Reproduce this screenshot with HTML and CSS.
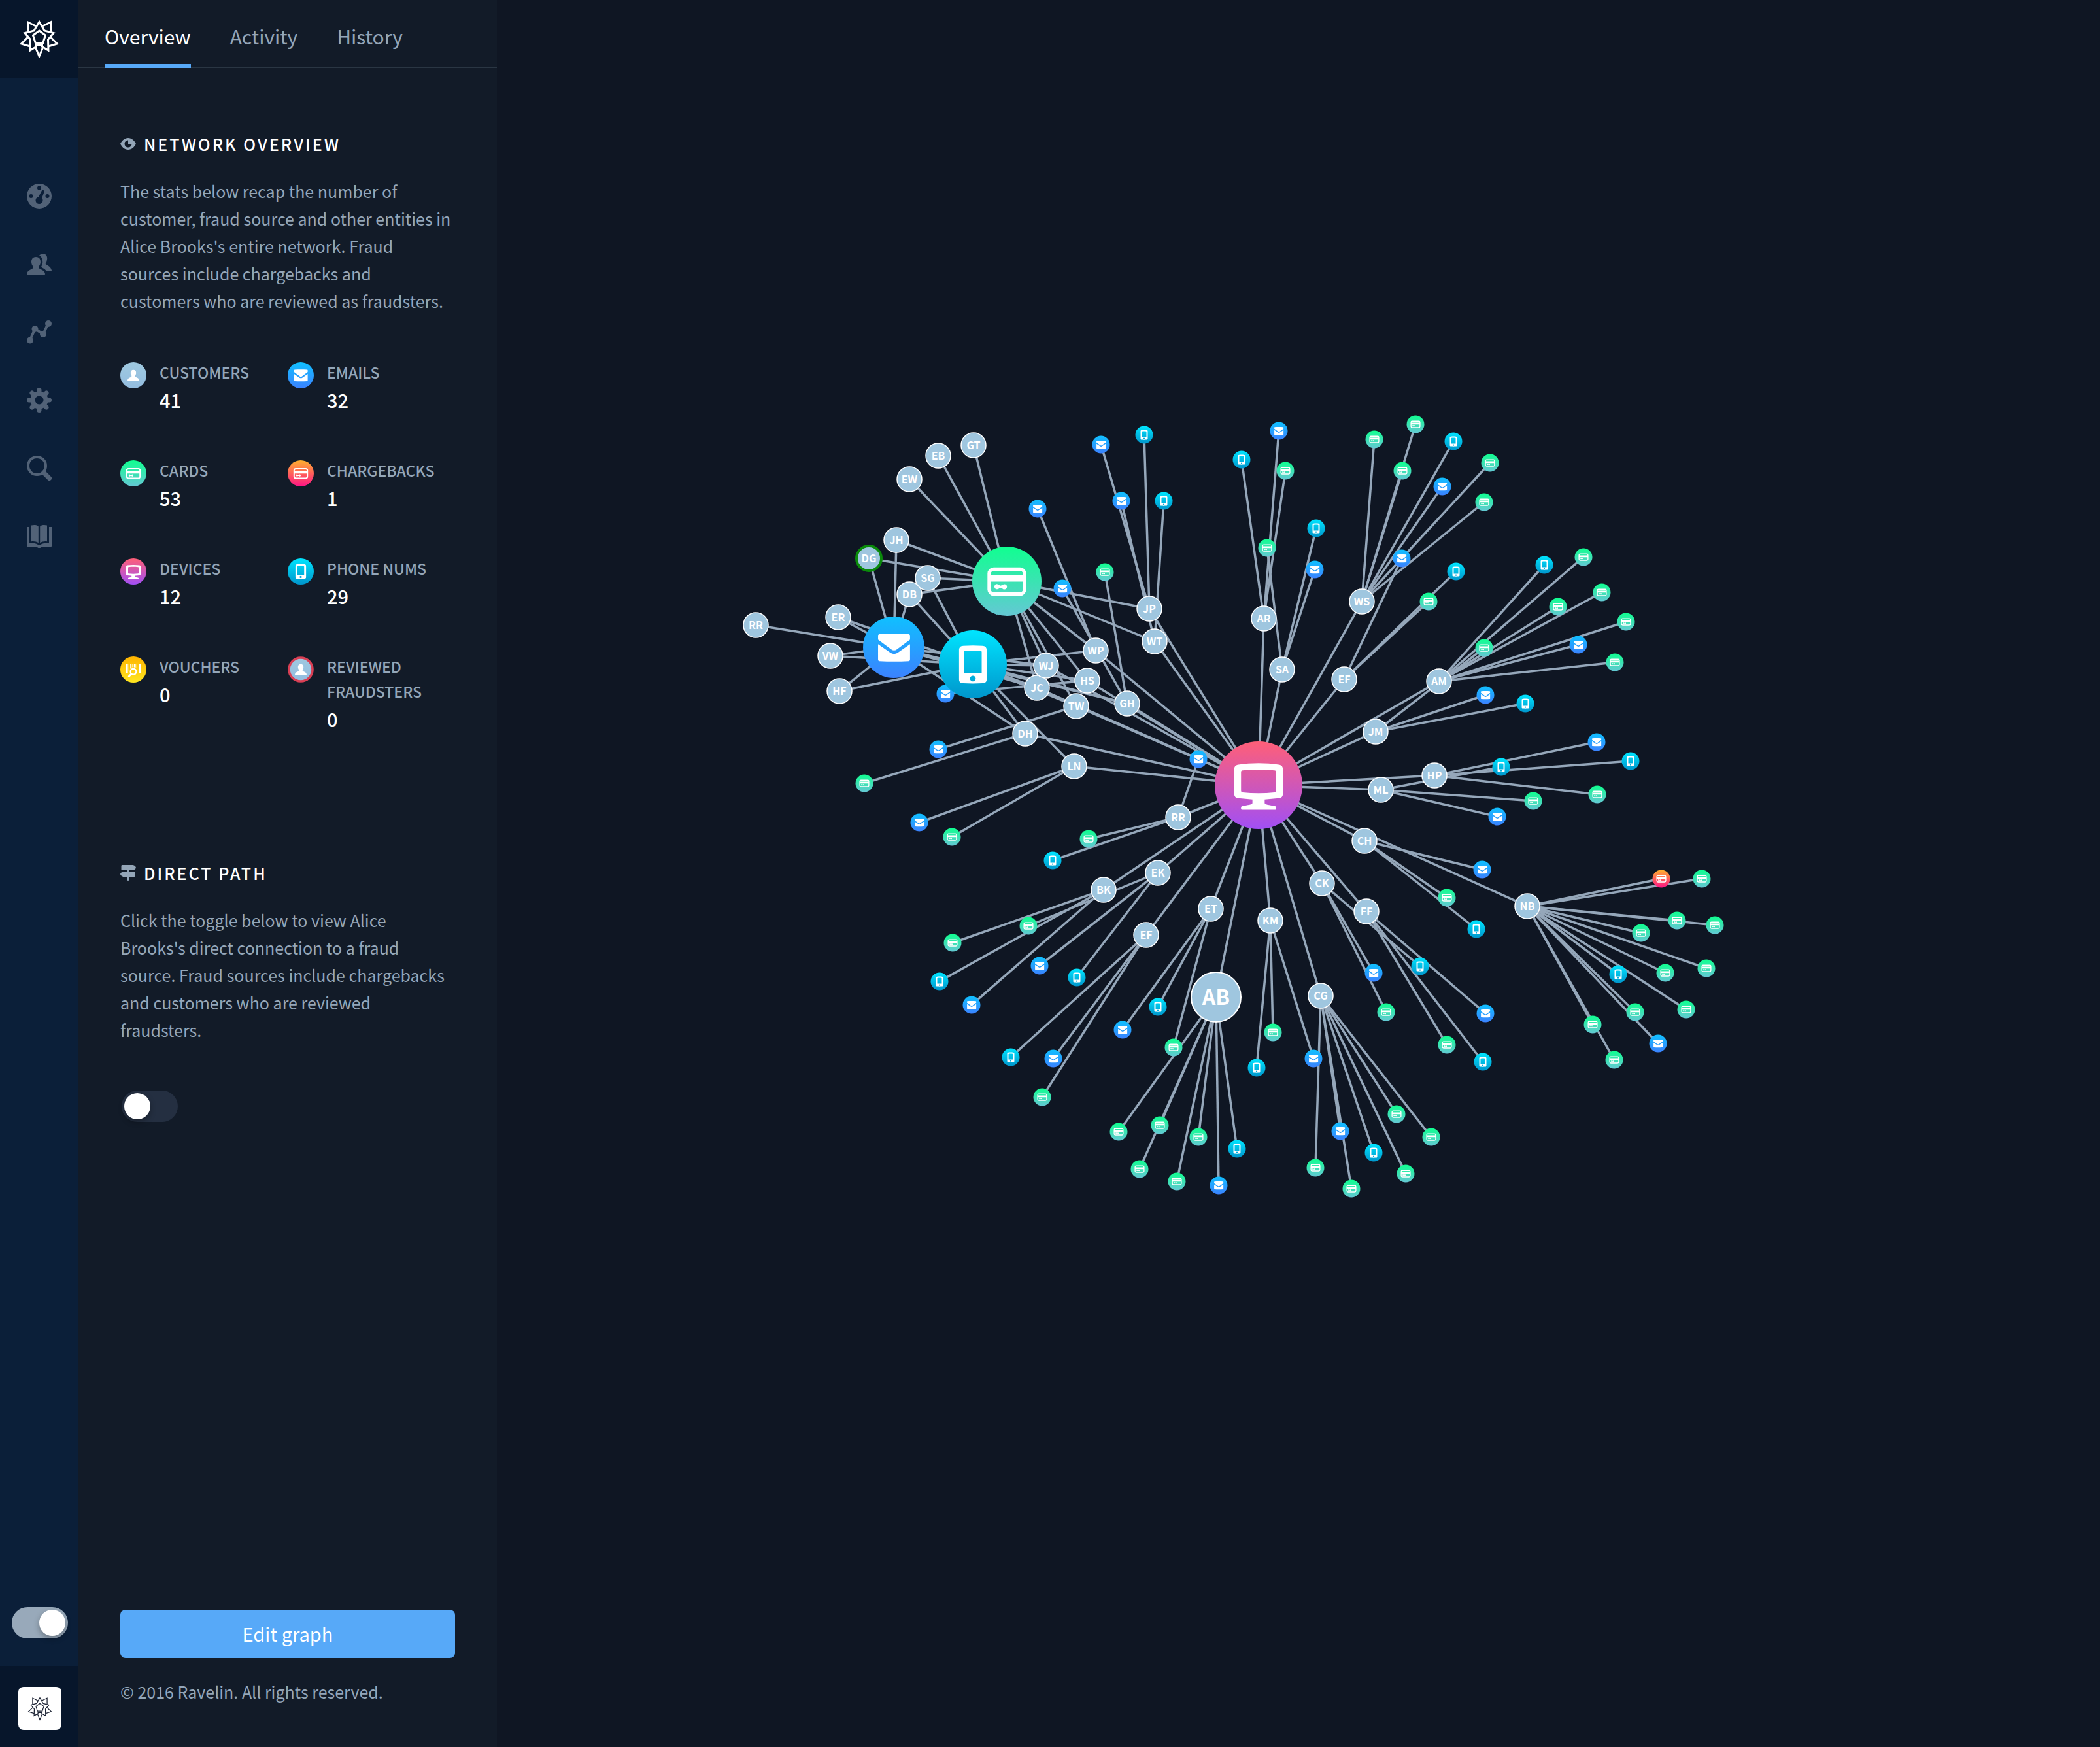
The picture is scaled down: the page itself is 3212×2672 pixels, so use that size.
FILE: index.html
```html
<!DOCTYPE html>
<html lang="en">
<head>
<meta charset="utf-8">
<title>Network – Alice Brooks</title>
<meta name="viewport" content="width=device-width, initial-scale=1">
<link rel="stylesheet" href="styles.css">
</head>
<body>
<svg class="defs" aria-hidden="true">
  <defs>
    <linearGradient id="g-mail" x2="0" y2="1"><stop stop-color="#10c0ff"/><stop offset="1" stop-color="#3b82ff"/></linearGradient>
    <linearGradient id="g-card" x2="0" y2="1"><stop stop-color="#10ff90"/><stop offset="1" stop-color="#64c8d4"/></linearGradient>
    <linearGradient id="g-phone" x2="0" y2="1"><stop stop-color="#00e5ff"/><stop offset="1" stop-color="#0096cc"/></linearGradient>
    <linearGradient id="g-device" x2="0" y2="1"><stop stop-color="#ff5f78"/><stop offset="1" stop-color="#a14ff5"/></linearGradient>
    <linearGradient id="g-charge" x2="0" y2="1"><stop stop-color="#ffb02e"/><stop offset="1" stop-color="#ff1486"/></linearGradient>
    <linearGradient id="g-voucher" x2="0" y2="1"><stop stop-color="#ffb400"/><stop offset="1" stop-color="#ffe620"/></linearGradient>
    <linearGradient id="g-person" x2="0" y2="1"><stop stop-color="#9fc9e0"/><stop offset="1" stop-color="#93bde0"/></linearGradient>
  </defs>
  <symbol id="i-card" viewBox="0 0 100 100">
    <rect x="24.5" y="32.5" width="51" height="36" rx="6.5" fill="none" stroke="#fff" stroke-width="5"/>
    <path fill="#fff" d="M24 41h52v9.500H24zM35.500 54a3.800 3.800 0 0 1 3 1.500c1.500 1 3.500 1 5 0a3.800 3.800 0 1 1 0 5c-1.500-1-3.500-1-5 0a3.800 3.800 0 1 1-3-6.500z"/>
  </symbol>
  <symbol id="i-mail" viewBox="0 0 100 100">
    <path fill="#fff" d="M24.500 31c0-1.500 1-2.300 2.500-2.400 16-1 31-1 47 0 1.500.1 2.500.9 2.500 2.400v6.500L55 53.500c-3 2.200-6 2.200-9 0L24.500 37.500zM24.500 45l19.500 13.500c4.500 3 8.500 3 13 0L76.500 45v25c0 1.500-1 2.400-2.500 2.500-16 1-31 1-47 0-1.500-.1-2.500-1-2.500-2.500z"/>
  </symbol>
  <symbol id="i-phone" viewBox="0 0 100 100">
    <path fill="#fff" fill-rule="evenodd" d="M36 22.800c9-.7 19-.7 28 0 4 .3 6.300 2.200 6.300 6.200v43c0 4-2.300 5.800-6.300 6-9 .5-19 .5-28 0-4-.2-6.300-2-6.300-6V29c0-4 2.300-5.900 6.300-6.200zM37 32v31h26V32c0-1.200-.6-1.700-1.800-1.800-7-.4-15-.4-22.400 0-1.200.1-1.800.6-1.800 1.800zM50 66.800a4.200 4.200 0 1 0 0 8.400 4.200 4.200 0 0 0 0-8.400z"/>
  </symbol>
  <symbol id="i-device" viewBox="0 0 100 100">
    <path fill="#fff" fill-rule="evenodd" d="M27 26.500c15-2.200 31-2.200 46 0 3 .4 4.700 2 4.700 5V60c0 3-1.700 4.300-4.700 4.800L57 66.200v4.400c1 1.600 5 2.200 11 3 1.500.3 2.200 1.200 2 3.200-.1.900-.6 1.200-1.400 1.200H31.400c-.8 0-1.300-.3-1.400-1.200-.2-2 .5-2.900 2-3.200 6-.8 10-1.400 11-3v-4.400l-16-1.400c-3-.5-4.700-1.800-4.700-4.800V31.500c0-3 1.700-4.600 4.700-5zM30 35v21c0 1.300.6 2 1.800 2.200 12.400 1.200 24 1.200 36.400 0 1.200-.2 1.800-.9 1.800-2.200V35c0-1.200-.6-1.800-1.800-2-12.400-1.300-24-1.300-36.400 0-1.200.2-1.800.8-1.800 2z"/>
  </symbol>
  <symbol id="i-person" viewBox="0 0 100 100">
    <path fill="#fff" d="M50 29.500c6.500 0 10.500 4.500 10.500 11 0 4-1.500 7.500-3.500 10v4c0 2.500 4 3.300 8 5 4.500 2 7 5.500 7.500 9.500 0 .7-.5 1-1.200 1H28.700c-.7 0-1.200-.3-1.200-1 .5-4 3-7.500 7.500-9.500 4-1.700 8-2.500 8-5v-4c-2-2.500-3.500-6-3.500-10 0-6.500 4-11 10.500-11z"/>
  </symbol>
  <symbol id="i-voucher" viewBox="0 0 100 100">
    <path fill="#fff" d="M22 29h7v36h-7zM32 29h3v28h-3zM38 29h5v14l-5 4zM46 29h3v12h-3zM52 29h7v13l-7-1zM62 29h3v18l-3-3zM70 29h8v36h-8z"/>
    <circle cx="50" cy="58" r="11" fill="none" stroke="#fff" stroke-width="6"/>
    <path d="M42 67l-9 9" stroke="#fff" stroke-width="7" stroke-linecap="round"/>
  </symbol>
  <symbol id="logo" viewBox="0 0 60 60">
    <g fill="none" stroke="currentColor" stroke-linejoin="miter">
      <path d="M30 18l9.500 7-3.700 11.500H24.200L20.500 25z"/>
      <path d="M30 4.500l8 13.500 14 3.500-8.500 10 .5 16.500-9.500-5.500v-2.500h-9v2.500L16 48l.5-16.500-8.500-10 14-3.500z"/>
      <path d="M35 11l12.500-6v15M25 11L12.500 5v15M46.500 27l11 11-13.500 4M13.500 27l-11 11L16 42M24.500 44L30 57l5.500-13"/>
    </g>
  </symbol>
</svg>

<div class="app">
  <nav class="rail" aria-label="Main">
    <a class="rail-logo" href="#" aria-label="Home"><svg class="logo"><use href="#logo"/></svg></a>
    <div class="rail-links">
      <a href="#" aria-label="Dashboard"><svg viewBox="0 0 38 38"><path fill-rule="evenodd" d="M19 0a19 19 0 1 1 0 38 19 19 0 0 1 0-38zm0 3.500a3 3 0 1 0 0 6 3 3 0 0 0 0-6zM6.500 16a3 3 0 1 0 0 6 3 3 0 0 0 0-6zm25 0a3 3 0 1 0 0 6 3 3 0 0 0 0-6zM25 10c-1-.4-1.800.2-2.300 1L18 20c-2.600.6-4.500 2.700-4.500 5.500a5.500 5.500 0 0 0 11 0c0-1.500-.4-2.700-1.300-3.700L26.800 12c.2-1 0-1.700-1.800-2z"/></svg></a>
      <a href="#" aria-label="Customers"><svg viewBox="0 0 38 38"><path d="M14 8c4.500 0 7 3 7 7.500 0 2.500-.9 5-2.300 6.700v2.300c0 1.500 2 2.200 4.300 3.200 3 1.400 4.800 3.800 5 6.300 0 .7-.3 1-1 1H1c-.7 0-1-.3-1-1 .3-2.500 2-4.900 5-6.300 2.300-1 4.300-1.700 4.300-3.200v-2.300C7.900 20.500 7 18 7 15.500 7 11 9.500 8 14 8z"/><path d="M19 6.500C20 4.300 22 3 24.500 3c4.300 0 6.700 3 6.700 7 0 3-1 5.500-2.500 7.200-.5 1.600 1 2.400 4 4.200 3 1.900 4.800 4.300 5.300 7.300 0 .9-.4 1.300-1.200 1.300H30c-1-2.300-3-4-6.500-5.500-1.700-.8-1.500-1.700-.6-3.200 1-2 1.500-4 1.300-6.800-.2-3.700-2-7-5.200-9z"/></svg></a>
      <a href="#" aria-label="Charts"><svg viewBox="0 0 38 38"><path fill="none" stroke="currentColor" stroke-width="4" d="M5 31l7.500-17L25 22l8-17"/><circle cx="5" cy="31.500" r="5"/><circle cx="12.500" cy="14" r="5"/><circle cx="25" cy="22" r="5"/><circle cx="33" cy="6" r="5"/></svg></a>
      <a href="#" aria-label="Settings"><svg viewBox="0 0 38 38"><path fill="none" stroke="currentColor" stroke-width="7" stroke-linecap="round" d="M19 3.500v31M3.500 19h31M8 8l22 22M30 8L8 30"/><circle cx="19" cy="19" r="13.500"/><circle class="hole" cx="19" cy="19" r="6.500"/></svg></a>
      <a href="#" aria-label="Search"><svg viewBox="0 0 38 38"><g fill="none" stroke="currentColor"><circle cx="15.500" cy="15.500" r="13.500" stroke-width="4"/><path d="M26 26l8.500 8.500" stroke-width="7" stroke-linecap="round"/></g></svg></a>
      <a href="#" aria-label="Documentation"><svg viewBox="0 0 38 38"><path d="M7 2.500c4-.9 7.500-.6 10 .8.600.4.800.8.800 1.500v24.400c-3.300-2-7-2.500-10.800-2zM31 2.500c-4-.9-7.500-.6-10 .8-.6.4-.8.800-.8 1.500v24.400c3.300-2 7-2.500 10.800-2z"/><path d="M0 5h4v25c5-.7 9.500-.3 12 1.500 2 1.300 4 1.300 6 0 2.500-1.800 7-2.200 12-1.500V5h4v29c0 .7-.3 1-1 1H24c-2 0-1.500 2-5 2s-3-2-5-2H1c-.7 0-1-.3-1-1z"/></svg></a>
    </div>
    <div class="rail-toggle"><input class="switch" type="checkbox" role="switch" aria-label="Dark theme" checked></div>
    <div class="rail-user"><a class="avatar" href="#" aria-label="Account"><svg class="logo"><use href="#logo"/></svg></a></div>
  </nav>

  <aside class="panel">
    <nav class="tabs" aria-label="Views">
      <a class="tab active" href="#" aria-current="page">Overview</a>
      <a class="tab" href="#">Activity</a>
      <a class="tab" href="#">History</a>
    </nav>
    <div class="panel-body">
      <section>
        <h2><svg viewBox="0 0 24 24"><path fill-rule="evenodd" d="M12 3c5.500 0 9.500 4 12 9-2.500 5-6.500 9-12 9S2.500 17 0 12c2.500-5 6.500-9 12-9zm0 3.500a5.500 5.500 0 1 0 5.500 5.500H12z"/></svg>Network overview</h2>
        <p>The stats below recap the number of customer, fraud source and other entities in Alice Brooks's entire network. Fraud sources include chargebacks and customers who are reviewed as fraudsters.</p>
        <dl class="stats">
          <div class="stat"><svg viewBox="0 0 100 100"><circle cx="50" cy="50" r="50" fill="url(#g-person)"/><use href="#i-person"/></svg><dt>Customers</dt><dd>41</dd></div>
          <div class="stat"><svg viewBox="0 0 100 100"><circle cx="50" cy="50" r="50" fill="url(#g-mail)"/><use href="#i-mail"/></svg><dt>Emails</dt><dd>32</dd></div>
          <div class="stat"><svg viewBox="0 0 100 100"><circle cx="50" cy="50" r="50" fill="url(#g-card)"/><use href="#i-card"/></svg><dt>Cards</dt><dd>53</dd></div>
          <div class="stat"><svg viewBox="0 0 100 100"><circle cx="50" cy="50" r="50" fill="url(#g-charge)"/><use href="#i-card"/></svg><dt>Chargebacks</dt><dd>1</dd></div>
          <div class="stat"><svg viewBox="0 0 100 100"><circle cx="50" cy="50" r="50" fill="url(#g-device)"/><use href="#i-device"/></svg><dt>Devices</dt><dd>12</dd></div>
          <div class="stat"><svg viewBox="0 0 100 100"><circle cx="50" cy="50" r="50" fill="url(#g-phone)"/><use href="#i-phone"/></svg><dt>Phone nums</dt><dd>29</dd></div>
          <div class="stat"><svg viewBox="0 0 100 100"><circle cx="50" cy="50" r="50" fill="url(#g-voucher)"/><use href="#i-voucher"/></svg><dt>Vouchers</dt><dd>0</dd></div>
          <div class="stat"><svg viewBox="0 0 100 100"><circle cx="50" cy="50" r="45" fill="url(#g-person)" stroke="#d93f54" stroke-width="9"/><use href="#i-person"/></svg><dt>Reviewed fraudsters</dt><dd>0</dd></div>
        </dl>
      </section>
      <section class="path">
        <h2><svg viewBox="0 0 24 24"><path d="M3 0h16c2 0 5 2.500 5 4s-3 4-5 4h-5v2h7c1 0 1.500.5 1.500 1.500v5c0 1-.5 1.500-1.500 1.500h-7v4c0 1.300-.7 2-2 2s-2-.7-2-2v-4H5c-2 0-5-2.500-5-4s3-4 5-4h5V8H3C2 8 1.500 7.500 1.500 6.500v-5C1.500.5 2 0 3 0z"/></svg>Direct path</h2>
        <p id="path-help">Click the toggle below to view Alice Brooks's direct connection to a fraud source. Fraud sources include chargebacks and customers who are reviewed fraudsters.</p>
        <input class="switch" type="checkbox" role="switch" aria-label="Show direct path" aria-describedby="path-help">
      </section>
      <footer>
        <button type="button" class="edit">Edit graph</button>
        <p>© 2016 Ravelin. All rights reserved.</p>
      </footer>
    </div>
  </aside>

  <main class="canvas">
    <svg id="graph" viewBox="760 0 2452 2672" role="img" aria-label="Network graph"></svg>
  </main>
</div>
<script src="graph.js"></script>
</body>
</html>
```
FILE: graph.js
```js
// Entities shared by many customers: id -> [x, y, radius, kind]
const hubs = {
  C: [1540, 889, 53, 'card'],
  M: [1367, 990, 47, 'mail'],
  P: [1488, 1016, 52, 'phone'],
  D: [1925, 1201, 67, 'device']
};

// x, y, initials, shared hubs, leaves (m mail, c card, p phone, x chargeback)
const customers = [
  [1489, 681, 'GT', 'C', ''],
  [1435, 697, 'EB', 'C', ''],
  [1391, 733, 'EW', 'C', ''],
  [1371, 826, 'JH', 'CM', ''],
  [1329, 854, 'DG', 'CM', ''],
  [1391, 909, 'DB', 'CMP', ''],
  [1419, 884, 'SG', 'CP', ''],
  [1156, 956, 'RR', 'M', ''],
  [1282, 944, 'ER', 'MP', ''],
  [1270, 1003, 'VW', 'MP', ''],
  [1284, 1057, 'HF', 'MP', ''],
  [1676, 995, 'WP', 'CPD', 'm1587,778'],
  [1586, 1052, 'JC', 'CMPD', ''],
  [1600, 1018, 'WJ', 'CMPD', ''],
  [1663, 1041, 'HS', 'CPD', 'm1446,1061'],
  [1646, 1080, 'TW', 'CPD', 'm1435,1146'],
  [1724, 1076, 'GH', 'MPD', 'm1625,900 c1690,875'],
  [1568, 1122, 'DH', 'MPD', 'c1322,1198'],
  [1643, 1172, 'LN', 'PD', 'm1406,1258 c1456,1280'],
  [1758, 931, 'JP', 'CD', 'm1684,680 p1750,665'],
  [1766, 981, 'WT', 'CD', 'm1715,766 p1780,766'],
  [1802, 1250, 'RR', 'D', 'm1833,1161 c1665,1283 p1610,1316'],
  [1933, 946, 'AR', 'D', 'p1899,703 m1956,659 c1966,720'],
  [1961, 1024, 'SA', 'D', 'c1938,838 p2013,808 m2011,871'],
  [2083, 920, 'WS', 'D', 'c2102,672 c2165,649 p2223,675 c2279,708 c2145,720 m2206,744 c2270,768'],
  [2056, 1039, 'EF', 'D', 'm2144,854 p2227,874 c2185,920'],
  [2201, 1042, 'AM', 'D', 'p2362,864 c2383,928 c2422,852 c2450,906 c2487,951 m2414,986 c2470,1013'],
  [2104, 1119, 'JM', 'D', 'c2270,991 m2272,1063 p2333,1076'],
  [2194, 1186, 'HP', 'D', 'm2442,1135 p2494,1164 c2443,1215'],
  [2112, 1208, 'ML', 'D', 'p2296,1173 c2345,1225 m2290,1249'],
  [2087, 1286, 'CH', 'D', 'm2267,1330 c2213,1373 p2258,1421'],
  [1771, 1335, 'EK', 'D', 'c1573,1416 m1590,1477 p1647,1495'],
  [1688, 1361, 'BK', 'D', 'c1457,1442 p1437,1501 m1486,1537'],
  [1753, 1430, 'EF', 'D', 'p1546,1617 m1611,1619 c1594,1678'],
  [1852, 1390, 'ET', 'D', 'p1771,1540 m1717,1575 c1795,1602'],
  [1943, 1408, 'KM', 'D', 'p1922,1633 c1947,1579 m2009,1619'],
  [2022, 1351, 'CK', 'D', 'm2101,1488 c2120,1548 p2172,1478'],
  [2090, 1394, 'FF', 'D', 'm2272,1550 c2213,1598 p2268,1624'],
  [2020, 1523, 'CG', 'D', 'c2012,1786 m2050,1730 c2067,1818 p2101,1763 c2136,1704 c2150,1795 c2189,1739'],
  [2336, 1386, 'NB', 'D', 'x2541,1344 c2603,1344 c2565,1408 c2623,1415 c2510,1427 c2610,1481 c2547,1488 p2475,1490 c2579,1544 c2501,1548 c2436,1567 m2536,1596 c2469,1621'],
  [1860, 1525, 'AB', 'D', 'c1711,1731 c1774,1721 c1833,1739 c1743,1788 c1800,1807 m1864,1813 p1892,1757']
];

const kinds = { m: 'mail', c: 'card', p: 'phone', x: 'charge' };
const NS = 'http://www.w3.org/2000/svg';
const graph = document.getElementById('graph');

function add(parent, name, attrs, text) {
  const el = document.createElementNS(NS, name);
  for (const key in attrs) el.setAttribute(key, attrs[key]);
  if (text) el.textContent = text;
  parent.appendChild(el);
  return el;
}

function entity(parent, x, y, r, kind) {
  add(parent, 'circle', { cx: x, cy: y, r: r, fill: `url(#g-${kind})` });
  const icon = kind === 'charge' ? 'card' : kind;
  add(parent, 'use', { href: `#i-${icon}`, x: x - r, y: y - r, width: r * 2, height: r * 2 });
}

const edges = add(graph, 'g', { class: 'edges' });
const leaves = add(graph, 'g', {});
const people = add(graph, 'g', { class: 'people' });
const shared = add(graph, 'g', {});

for (const [x, y, initials, links, own] of customers) {
  for (const id of links) {
    add(edges, 'line', { x1: x, y1: y, x2: hubs[id][0], y2: hubs[id][1] });
  }
  for (const leaf of own.split(' ').filter(Boolean)) {
    const [lx, ly] = leaf.slice(1).split(',').map(Number);
    add(edges, 'line', { x1: x, y1: y, x2: lx, y2: ly });
    entity(leaves, lx, ly, 13.5, kinds[leaf[0]]);
  }
  const state = initials === 'AB' ? 'focus' : initials === 'DG' ? 'genuine' : '';
  const node = add(people, 'g', { class: state });
  add(node, 'circle', { cx: x, cy: y, r: state === 'focus' ? 38 : 19 });
  add(node, 'text', { x: x, y: y, dy: '.37em' }, initials);
}

for (const id in hubs) entity(shared, ...hubs[id]);
```
FILE: styles.css
```css
* { box-sizing: border-box; }

body {
  margin: 0;
  background: #0f1623;
  color: #94a6b8;
  font-family: "Noto Sans CJK JP", "Noto Sans CJK SC", "Noto Sans", sans-serif;
  font-size: 25px;
  line-height: 42px;
}

a { color: inherit; text-decoration: none; }
p, h2, dl, dd { margin: 0; }
.defs { position: absolute; width: 0; height: 0; }

.app { display: flex; min-height: 100vh; }

/* Icon rail */
.rail {
  display: flex;
  flex-direction: column;
  flex: 0 0 120px;
  background: #0b1f39;
}
.rail-logo, .rail-user {
  display: flex;
  align-items: center;
  justify-content: center;
  background: #07162b;
}
.rail-logo { height: 120px; padding-bottom: 2px; color: #fff; }
.rail-user { height: 124px; margin-top: 42px; padding: 6px 0 0 2px; }
.logo { width: 60px; height: 60px; stroke-width: 3px; }
.rail-links { padding-top: 128px; margin-bottom: auto; }
.rail-links a {
  display: flex;
  align-items: center;
  justify-content: center;
  height: 104px;
  color: #526277;
}
.rail-links svg { width: 38px; height: 38px; fill: currentColor; }
.rail-links .hole { fill: #0b1f39; }
.rail-toggle { display: flex; justify-content: center; padding-left: 2px; }
.avatar {
  display: flex;
  align-items: center;
  justify-content: center;
  width: 66px;
  height: 66px;
  border-radius: 8px;
  background: #fff;
  color: #1b2233;
}
.avatar .logo { width: 38px; height: 38px; stroke-width: 2px; }

/* Switches */
.switch {
  appearance: none;
  display: block;
  width: 86px;
  height: 48px;
  margin: 0;
  padding: 4px;
  border-radius: 24px;
  background: #242f41;
}
.switch::before {
  content: "";
  display: block;
  width: 40px;
  height: 40px;
  border-radius: 50%;
  background: #fff;
  box-shadow: 0 4px 10px rgba(0, 0, 0, .3);
}
.switch:checked { background: #98a9ba; }
.switch:checked::before { margin-left: auto; }

/* Side panel */
.panel {
  display: flex;
  flex-direction: column;
  flex: 0 0 640px;
  background: #121b28;
}
.tabs {
  display: flex;
  gap: 60px;
  height: 104px;
  padding: 0 40px;
  border-bottom: 2px solid #2a3643;
}
.tab {
  height: 104px;
  padding-top: 34px;
  font-size: 30px;
}
.tab.active { color: #fff; border-bottom: 6px solid #57a9f8; }

.panel-body {
  display: flex;
  flex-direction: column;
  flex: 1;
  padding: 95px 64px 64px;
}
.panel-body p { padding-right: 4px; }
h2 {
  display: flex;
  align-items: center;
  gap: 12px;
  margin-bottom: 30px;
  color: #fff;
  font-size: 25px;
  font-weight: 500;
  letter-spacing: 3px;
  text-transform: uppercase;
}
h2 svg { width: 24px; height: 24px; fill: #94a6b8; }

.stats {
  display: grid;
  grid-template-columns: 1fr 1fr;
  row-gap: 68px;
  margin-top: 69px;
}
.stat {
  display: grid;
  grid-template-columns: 40px 1fr;
  column-gap: 20px;
  align-content: start;
  row-gap: 2px;
}
.stat svg { width: 40px; height: 40px; margin-top: 4px; grid-row: 1 / span 2; }
.stat dt {
  line-height: 38px;
  font-size: 23px;
  font-weight: 500;
  text-transform: uppercase;
}
.stat dd { grid-column: 2; color: #fff; font-size: 29px; font-weight: 500; }

.path { margin-top: 194px; }
.path .switch { margin: 72px 0 40px 2px; }

footer { margin-top: auto; }
.edit {
  display: block;
  width: 100%;
  height: 74px;
  margin-bottom: 30px;
  padding: 0 0 2px;
  border: 0;
  border-radius: 8px;
  background: #57a9f8;
  color: #fff;
  font-family: inherit;
  font-size: 29px;
}

/* Graph */
.canvas { flex: 1; min-width: 0; }
.canvas svg { display: block; width: 100%; height: 100vh; }
.edges line { stroke: #95a7ba; stroke-width: 3.5; }
.people circle { fill: #9fc6df; stroke: #fff; stroke-width: 1.5; }
.people text {
  fill: #fff;
  font-size: 16px;
  font-weight: 700;
  text-anchor: middle;
}
.people .genuine circle { stroke: #0a8a0a; stroke-width: 4; }
.people .focus circle { stroke-width: 2; }
.people .focus text { font-size: 32px; }
```
